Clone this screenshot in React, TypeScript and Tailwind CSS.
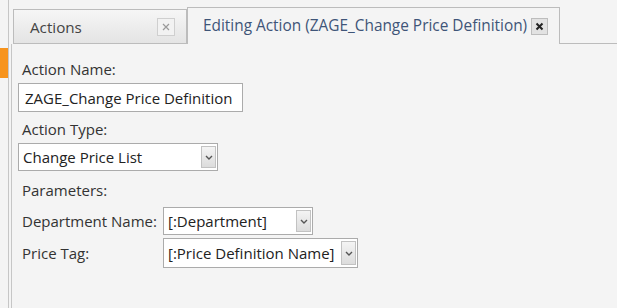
import React from "react";

function Chevron() {
  return (
    <svg width="8" height="5" viewBox="0 0 8 5" className="block">
      <path d="M1 1 L4 4 L7 1" fill="none" stroke="#555" strokeWidth="1.4" />
    </svg>
  );
}

function Select({ value, width, height }: { value: string; width: string; height: string }) {
  return (
    <div className={`${width} ${height} bg-white border border-[#ababab] flex items-center pl-[4px] pr-[1px] py-[2px] box-border`}>
      <span className="flex-1 whitespace-nowrap overflow-hidden text-[#222]">{value}</span>
      <div className="w-[15px] h-full border border-[#c2c2c2] bg-gradient-to-b from-[#f4f4f4] to-[#dcdcdc] flex items-center justify-center">
        <Chevron />
      </div>
    </div>
  );
}

export default function App() {
  return (
    <div className="w-[617px] h-[308px] bg-[#f4f4f4] flex overflow-hidden font-['Open_Sans',sans-serif] text-[15px] leading-[20px] text-[#333]">
      {/* left strip */}
      <div className="w-[9px] border-r border-[#c6c6c6] flex flex-col">
        <div className="mt-[48px] h-[30px] w-[8px] bg-[#f7941d]" />
      </div>
      <div className="w-[2px]" />
      {/* main column */}
      <div className="flex-1 flex flex-col">
        {/* tab strip */}
        <div className="h-[44px] flex items-end">
          <div className="w-[2px] h-full" />
          <div className="w-[174px] h-[35px] border border-[#bcbcbc] bg-gradient-to-b from-[#f6f6f6] to-[#e4e4e4] flex items-center pl-[16px] pr-[11px]">
            <span className="flex-1 text-[#444] text-[15.2px]">Actions</span>
            <div className="w-[18px] h-[18px] border border-[#cfcfcf] bg-[#f2f2f2] flex items-center justify-center text-[#9a9a9a]">
              <svg width="8" height="8" viewBox="0 0 8 8" className="block">
                <path d="M1 1 L7 7 M7 1 L1 7" stroke="#9a9a9a" strokeWidth="1.2" />
              </svg>
            </div>
          </div>
          <div className="w-[373px] h-[37px] border-t border-l border-r border-[#bcbcbc] bg-[#f4f4f4] flex items-center pl-[15px] pr-[11px]">
            <span className="flex-1 whitespace-nowrap text-[#3f5578] text-[15.4px]">
              Editing Action (ZAGE_Change Price Definition)
            </span>
            <div className="w-[17px] h-[17px] border border-[#bdbdbd] bg-[#e2e2e2] flex items-center justify-center">
              <svg width="9" height="9" viewBox="0 0 9 9" className="block">
                <path d="M1.5 1.5 L7.5 7.5 M7.5 1.5 L1.5 7.5" stroke="#222" strokeWidth="2" />
              </svg>
            </div>
          </div>
          <div className="flex-1 h-[1px] bg-[#bcbcbc]" />
        </div>
        {/* content */}
        <div className="flex-1 border-l border-[#c6c6c6] flex flex-col pl-[6px]">
          <div className="mt-[15px] ml-[4px]">Action Name:</div>
          <div className="mt-[4px] w-[225px] h-[29px] bg-white border border-[#ababab] flex items-center pl-[6px] text-[#222] whitespace-nowrap overflow-hidden">
            ZAGE_Change Price Definition
          </div>
          <div className="mt-[7px] ml-[4px]">Action Type:</div>
          <div className="mt-[4px]">
            <Select value="Change Price List" width="w-[200px]" height="h-[28px]" />
          </div>
          <div className="mt-[9px] ml-[4px]">Parameters:</div>
          <div className="mt-[7px] flex items-center">
            <div className="w-[145px] pl-[4px]">Department Name:</div>
            <Select value="[:Department]" width="w-[150px]" height="h-[28px]" />
          </div>
          <div className="mt-[3px] flex items-center">
            <div className="w-[145px] pl-[4px]">Price Tag:</div>
            <Select value="[:Price Definition Name]" width="w-[195px]" height="h-[30px]" />
          </div>
        </div>
      </div>
    </div>
  );
}
